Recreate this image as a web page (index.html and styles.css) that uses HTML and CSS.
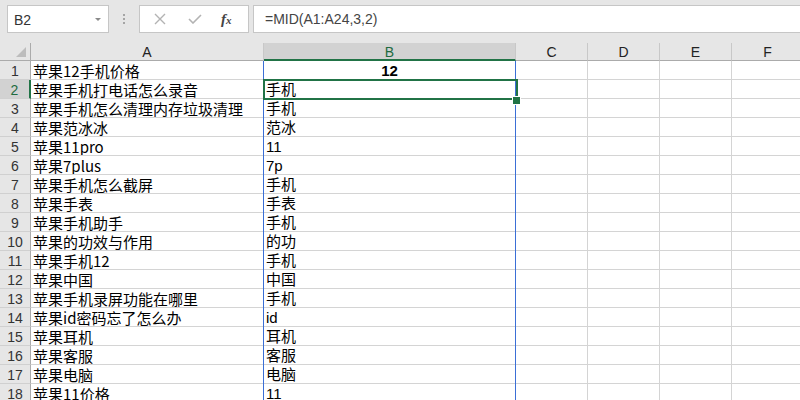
FILE: index.html
```html
<!DOCTYPE html>
<html lang="zh">
<head>
<meta charset="utf-8">
<title>Excel</title>
<link rel="stylesheet" href="styles.css">
</head>
<body>
<div class="toolbar">
  <div class="namebox"><span class="name">B2</span><span class="caret"></span></div>
  <div class="dots"><i></i><i></i><i></i></div>
  <div class="fxbox">
    <svg class="ico" width="12" height="12" viewBox="0 0 12 12"><path d="M1 1 L11 11 M11 1 L1 11" stroke="#b3b3b3" stroke-width="1.4" fill="none"/></svg>
    <svg class="ico" width="14" height="10" viewBox="0 0 14 10"><path d="M1 5 L5 9 L13 1" stroke="#b3b3b3" stroke-width="1.6" fill="none"/></svg>
    <span class="fx"><span class="f">f</span><span class="x">x</span></span>
  </div>
  <div class="formula">=MID(A1:A24,3,2)</div>
</div>
<div class="sheet">
  <div class="grid">
    <div class="corner"><span class="tri"></span></div>
    <div class="ch">A</div>
    <div class="ch sel">B</div>
    <div class="ch">C</div>
    <div class="ch">D</div>
    <div class="ch">E</div>
    <div class="ch">F</div>

    <div class="rh">1</div><div class="c a">苹果12手机价格</div><div class="c b ctr">12</div><div class="c"></div><div class="c"></div><div class="c"></div><div class="c"></div>
    <div class="rh sel">2</div><div class="c a">苹果手机打电话怎么录音</div><div class="c b">手机</div><div class="c"></div><div class="c"></div><div class="c"></div><div class="c"></div>
    <div class="rh">3</div><div class="c a">苹果手机怎么清理内存垃圾清理</div><div class="c b">手机</div><div class="c"></div><div class="c"></div><div class="c"></div><div class="c"></div>
    <div class="rh">4</div><div class="c a">苹果范冰冰</div><div class="c b">范冰</div><div class="c"></div><div class="c"></div><div class="c"></div><div class="c"></div>
    <div class="rh">5</div><div class="c a">苹果11pro</div><div class="c b">11</div><div class="c"></div><div class="c"></div><div class="c"></div><div class="c"></div>
    <div class="rh">6</div><div class="c a">苹果7plus</div><div class="c b">7p</div><div class="c"></div><div class="c"></div><div class="c"></div><div class="c"></div>
    <div class="rh">7</div><div class="c a">苹果手机怎么截屏</div><div class="c b">手机</div><div class="c"></div><div class="c"></div><div class="c"></div><div class="c"></div>
    <div class="rh">8</div><div class="c a">苹果手表</div><div class="c b">手表</div><div class="c"></div><div class="c"></div><div class="c"></div><div class="c"></div>
    <div class="rh">9</div><div class="c a">苹果手机助手</div><div class="c b">手机</div><div class="c"></div><div class="c"></div><div class="c"></div><div class="c"></div>
    <div class="rh">10</div><div class="c a">苹果的功效与作用</div><div class="c b">的功</div><div class="c"></div><div class="c"></div><div class="c"></div><div class="c"></div>
    <div class="rh">11</div><div class="c a">苹果手机12</div><div class="c b">手机</div><div class="c"></div><div class="c"></div><div class="c"></div><div class="c"></div>
    <div class="rh">12</div><div class="c a">苹果中国</div><div class="c b">中国</div><div class="c"></div><div class="c"></div><div class="c"></div><div class="c"></div>
    <div class="rh">13</div><div class="c a">苹果手机录屏功能在哪里</div><div class="c b">手机</div><div class="c"></div><div class="c"></div><div class="c"></div><div class="c"></div>
    <div class="rh">14</div><div class="c a">苹果id密码忘了怎么办</div><div class="c b">id</div><div class="c"></div><div class="c"></div><div class="c"></div><div class="c"></div>
    <div class="rh">15</div><div class="c a">苹果耳机</div><div class="c b">耳机</div><div class="c"></div><div class="c"></div><div class="c"></div><div class="c"></div>
    <div class="rh">16</div><div class="c a">苹果客服</div><div class="c b">客服</div><div class="c"></div><div class="c"></div><div class="c"></div><div class="c"></div>
    <div class="rh">17</div><div class="c a">苹果电脑</div><div class="c b">电脑</div><div class="c"></div><div class="c"></div><div class="c"></div><div class="c"></div>
    <div class="rh">18</div><div class="c a">苹果11价格</div><div class="c b">11</div><div class="c"></div><div class="c"></div><div class="c"></div><div class="c"></div>
  </div>
  <div class="colsel"></div>
  <div class="cursor"></div>
  <div class="handle"></div>
</div>
</body>
</html>
```

FILE: styles.css
```css
html, body {
  margin: 0;
  padding: 0;
  background: #ffffff;
  overflow: hidden;
  width: 800px;
  height: 400px;
}
body {
  font-family: "Liberation Sans", "Noto Sans CJK SC", sans-serif;
  color: #222;
}
.toolbar {
  height: 43px;
  background: #e6e6e6;
  display: flex;
  align-items: flex-start;
  padding-top: 5px;
  box-sizing: border-box;
}
.namebox {
  margin-left: 7px;
  width: 102px;
  height: 28px;
  box-sizing: border-box;
  background: #fff;
  border: 1px solid #c6c6c6;
  display: flex;
  align-items: center;
  padding-left: 6px;
  padding-right: 7px;
  font-size: 14px;
  color: #333;
}
.name { flex: 1; padding-top: 1px; }
.caret {
  width: 0; height: 0;
  border-left: 3px solid transparent;
  border-right: 3px solid transparent;
  border-top: 3px solid #8a8a8a;
}
.dots {
  width: 30px;
  height: 28px;
  display: flex;
  flex-direction: column;
  align-items: center;
  justify-content: center;
  gap: 2px;
}
.dots i {
  display: block;
  width: 2px;
  height: 2px;
  background: #a5a5a5;
}
.fxbox {
  width: 110px;
  height: 28px;
  box-sizing: border-box;
  background: #fff;
  border: 1px solid #c6c6c6;
  display: flex;
  align-items: center;
  padding-left: 14px;
  gap: 22px;
}
.ico { display: block; }
.fx {
  font-family: "Liberation Serif", serif;
  font-style: italic;
  color: #444;
  margin-left: -3px;
  font-weight: bold;
}
.fx .f { font-size: 15px; }
.fx .x { font-size: 11px; }
.formula {
  flex: 1;
  margin-left: 4px;
  height: 28px;
  box-sizing: border-box;
  background: #fff;
  border: 1px solid #c6c6c6;
  border-right: none;
  padding-left: 11px;
  font-size: 14px;
  line-height: 27px;
  color: #444;
}
.sheet {
  position: relative;
}
.grid {
  display: grid;
  grid-template-columns: 31px 233px 252px 72px 72px 72px 72px;
  grid-template-rows: 18px;
  grid-auto-rows: 19px;
}
.grid > div {
  box-sizing: border-box;
  overflow: hidden;
  white-space: nowrap;
}
.corner {
  background: #e6e6e6;
  border-right: 1px solid #ababab;
  border-bottom: 1px solid #ababab;
  position: relative;
}
.tri {
  position: absolute;
  right: 4px;
  bottom: 3px;
  width: 0; height: 0;
  border-left: 10px solid transparent;
  border-bottom: 10px solid #bdbdbd;
}
.ch {
  background: #e6e6e6;
  border-right: 1px solid #c8c8c8;
  border-bottom: 1px solid #ababab;
  text-align: center;
  font-size: 14px;
  line-height: 18px;
  color: #222;
}
.ch.sel {
  background: #d2d2d2;
  border-bottom: 2px solid #217346;
  color: #1e6b40;
}
.rh {
  background: #e6e6e6;
  border-right: 1px solid #ababab;
  border-bottom: 1px solid #d0d0d0;
  text-align: center;
  font-size: 14px;
  line-height: 20px;
  color: #333;
}
.rh.sel {
  background: #d2d2d2;
  border-right: 2px solid #217346;
  color: #1e6b40;
}
.c {
  border-right: 1px solid #d4d4d4;
  border-bottom: 1px solid #d4d4d4;
  font-size: 15px;
  line-height: 19px;
  padding-left: 3px;
  color: #000;
}
.c.a {
  font-family: "Noto Sans CJK SC", sans-serif;
  padding-left: 2px;
}
.c.b {
  font-family: "Liberation Sans", "Noto Sans CJK SC", sans-serif;
  padding-left: 2px;
}
.c.ctr {
  text-align: center;
  font-weight: bold;
  padding-left: 0;
}
.colsel {
  position: absolute;
  left: 263px;
  top: 18px;
  width: 253px;
  height: 400px;
  box-sizing: border-box;
  border-left: 1px solid #3b6fd6;
  border-right: 1px solid #3b6fd6;
  pointer-events: none;
}
.cursor {
  position: absolute;
  left: 263px;
  top: 36px;
  width: 255px;
  height: 21px;
  box-sizing: border-box;
  border: 2px solid #217346;
}
.handle {
  position: absolute;
  left: 512px;
  top: 53px;
  width: 7px;
  height: 7px;
  background: #217346;
  border: 1px solid #fff;
}
```
